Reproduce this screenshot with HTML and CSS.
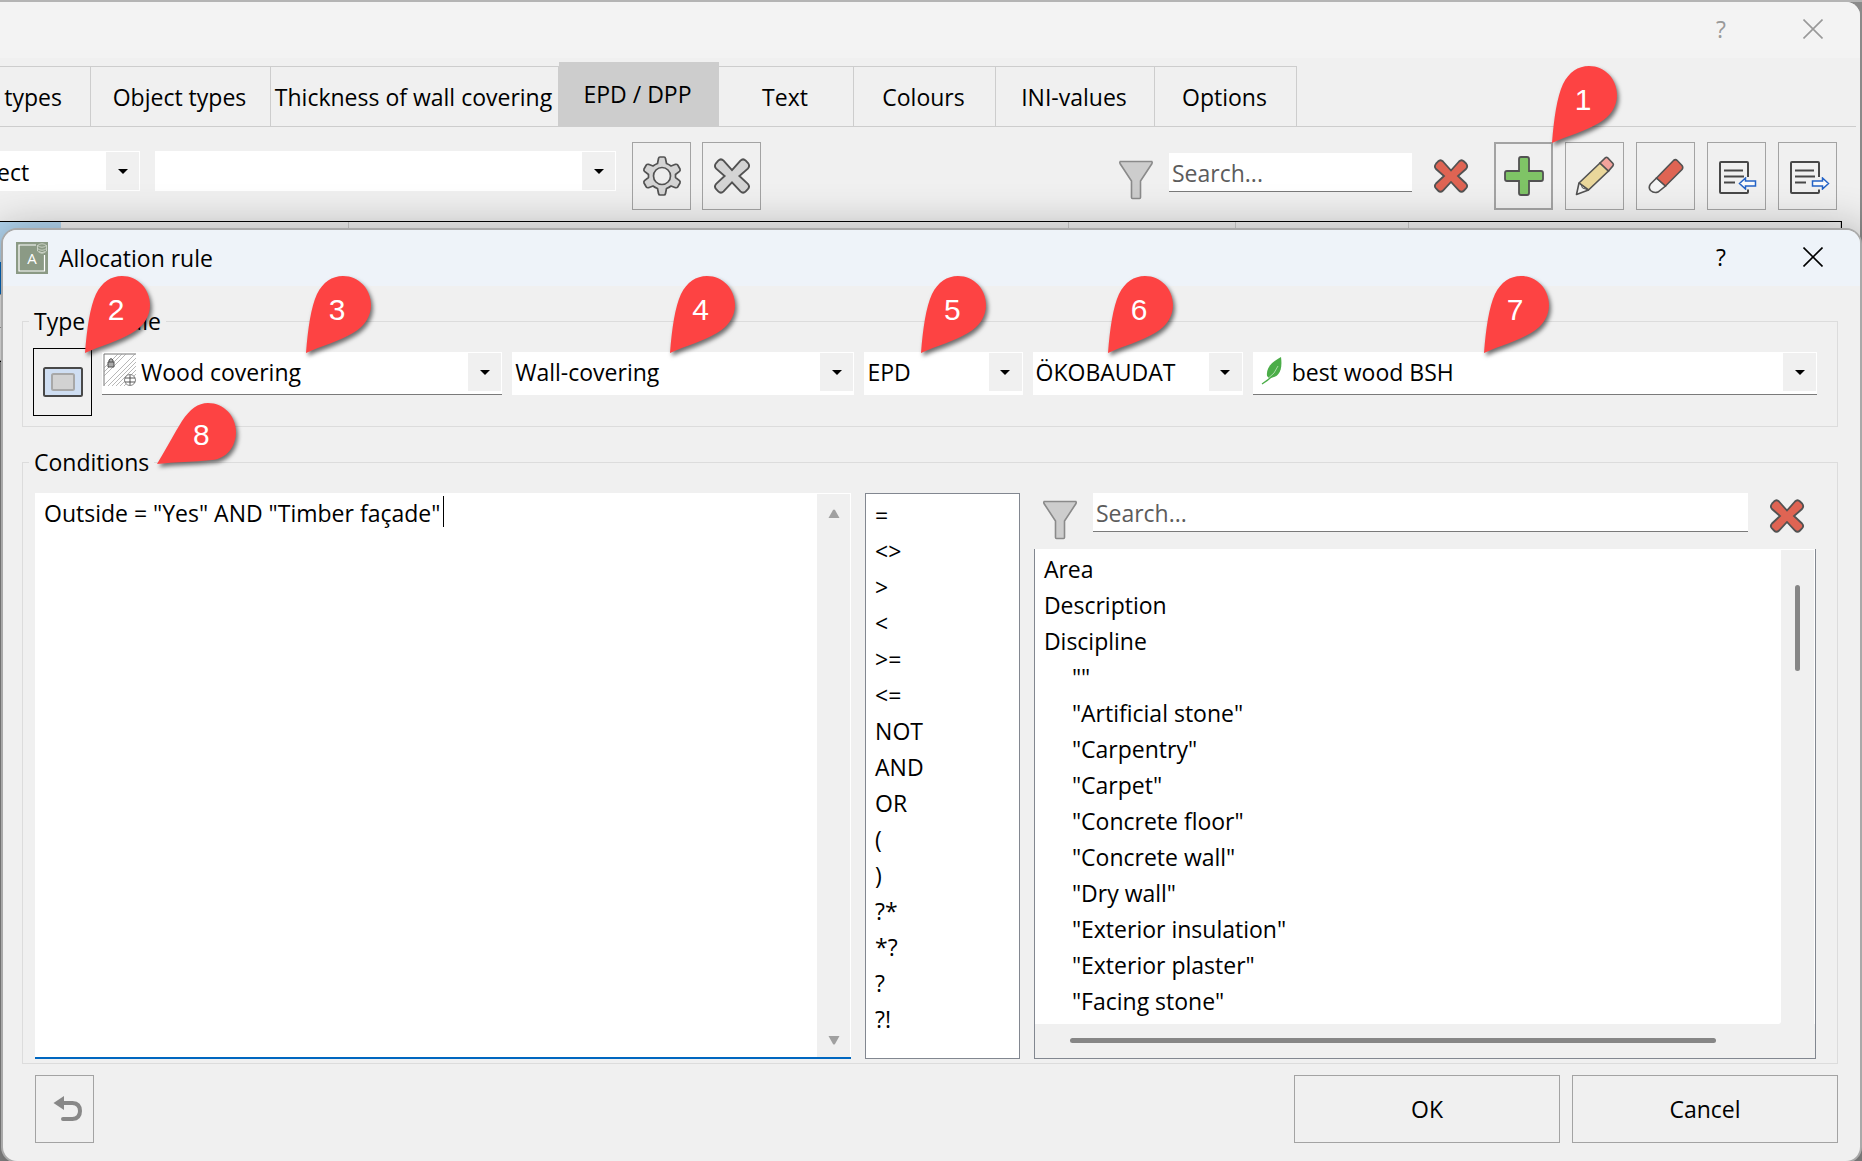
FILE: index.html
```html
<!DOCTYPE html>
<html lang="en">
<head>
<meta charset="utf-8">
<title>Allocation rule</title>
<link rel="stylesheet" href="styles.css">
</head>
<body>

<svg class="defs" aria-hidden="true">
  <symbol id="i-close" viewBox="0 0 20 20"><path d="M0.5 0.5 19.5 19.5M19.5 0.5 0.5 19.5" fill="none" stroke="currentColor" stroke-width="1.6"/></symbol>
  <symbol id="i-arrow" viewBox="0 0 10 5"><path d="M0 0H10L5 5Z" fill="currentColor"/></symbol>
  <symbol id="i-cross" viewBox="0 0 36 36"><path d="M18 12.500 26 3.500Q28.500 1 31 3.500L33.200 5.700Q35.300 8.500 33 11L25 18 33 25.500Q35.300 28 33 30.500L31 32.500Q28.500 35 26 32.500L18 24 10 32.500Q7.500 35 5 32.500L3 30.500Q0.700 28 3 25.500L11 18 3 11Q0.700 8.500 3 5.700L5 3.500Q7.500 1 10 3.500Z" stroke="#525252" stroke-width="1.8"/></symbol>
  <symbol id="i-funnel" viewBox="0 0 36 40"><path d="M2.200 1.500H33.800Q34.500 2.500 34 3.500L22.500 21V37.500Q22.500 38.500 21.500 38.500H14.500Q13.500 38.500 13.500 37.500V21L2 3.500Q1.500 2.500 2.200 1.500Z" fill="#cdcdcd" stroke="#8a8a8a" stroke-width="1.6"/></symbol>
  <symbol id="i-gear" viewBox="0 0 40 40"><path d="M18 1H22Q23.200 1 23.500 2.500L24.500 7.500Q27 8.500 29 10L33.500 8.300Q35 8 35.700 9L38 13Q38.500 14.300 37.500 15.300L33.500 18.500V21.500L37.500 24.700Q38.500 25.700 38 27L35.700 31Q35 32 33.500 31.700L29 30Q27 31.500 24.500 32.500L23.500 37.500Q23.200 39 22 39H18Q16.800 39 16.500 37.500L15.500 32.500Q13 31.500 11 30L6.500 31.700Q5 32 4.300 31L2 27Q1.500 25.700 2.500 24.700L6.500 21.500V18.500L2.500 15.300Q1.500 14.300 2 13L4.300 9Q5 8 6.500 8.300L11 10Q13 8.500 15.500 7.500L16.500 2.500Q16.800 1 18 1Z" fill="#d4d4d4" stroke="#525252" stroke-width="1.700" stroke-linejoin="round"/><circle cx="20" cy="20" r="8.500" fill="#ededed" stroke="#525252" stroke-width="1.700"/></symbol>
  <symbol id="i-plus" viewBox="0 0 40 40"><path d="M17 1H23Q25 1 25 3V15H37Q39 15 39 17V23Q39 25 37 25H25V37Q25 39 23 39H17Q15 39 15 37V25H3Q1 25 1 23V17Q1 15 3 15H15V3Q15 1 17 1Z" fill="#7fc466" stroke="#525252" stroke-width="1.8"/></symbol>
  <symbol id="i-pencil" viewBox="0 0 40 40"><path d="M4 27 1.500 38.500 13.500 34" fill="#f4f4f4" stroke="#525252" stroke-width="1.600" stroke-linejoin="round"/><path d="M4 27 25 7 33.500 15 13.500 34Z" fill="#ead79b" stroke="#525252" stroke-width="1.600"/><path d="M25 7 30.500 1.700Q31.500 1 32.500 1.700L38 7.500Q38.800 8.500 38 9.800L33.500 15Z" fill="#f2a29c" stroke="#525252" stroke-width="1.600"/><path d="M4 27 6 28.500 7.500 32 13.500 34" fill="none" stroke="#525252" stroke-width="1"/></symbol>
  <symbol id="i-eraser" viewBox="0 0 36 36"><path d="M8.500 20 2.500 26Q0 29.500 2.500 32.500 6 35.500 10 34L17.500 28Z" fill="#f4f4f4" stroke="#525252" stroke-width="1.600"/><path d="M8.500 20 25.500 2.500Q27.500 1 29 2.300L34 7.500Q35.500 9.500 34 11.500L17.500 28Z" fill="#df6453" stroke="#525252" stroke-width="1.600"/></symbol>
  <symbol id="i-sheet" viewBox="0 0 30 33"><path d="M29 16V2Q29 1 28 1H2Q1 1 1 2V31Q1 32 2 32H28Q29 32 29 31V28.500" fill="none" stroke="#484848" stroke-width="2"/><path d="M5 9.500H24M5 15.500H25M5 21.500H16" stroke="#484848" stroke-width="2"/></symbol>
  <symbol id="i-shaft" viewBox="0 0 18 13"><path d="M1 6.500 7 1V4H17V9H7V12Z" fill="#fafafa" stroke="#2463c6" stroke-width="1.500"/></symbol>
  <symbol id="i-pin" viewBox="0 0 66 78"><path d="M0 77C2 52 5 31 11 18 17 6 26 0 37 0 53 0 65 13 65 29 65 40 59 50 47 57 34 65 15 70 0 77Z" fill="#fd4343"/></symbol>
  <symbol id="i-pin-low" viewBox="0 0 80 62"><path d="M0 61C9 46 17 31 25 18 33 6 41 0 51 0 67 0 79 13 79 29 79 44 69 56 55 57 37 59 18 59 0 61Z" fill="#fd4343"/></symbol>
</svg>

<main class="desktop">
  <section class="window" aria-label="Settings">
    <header class="titlebar titlebar-inactive">
      <button class="caption" aria-label="Help">?</button>
      <button class="caption" aria-label="Close"><svg width="20" height="20"><use href="#i-close"/></svg></button>
    </header>

    <nav class="tabs">
      <button class="tab tab-cut">types</button>
      <button class="tab tab-object">Object types</button>
      <button class="tab tab-thickness">Thickness of wall covering</button>
      <button class="tab tab-active">EPD / DPP</button>
      <button class="tab tab-text">Text</button>
      <button class="tab tab-colours">Colours</button>
      <button class="tab tab-ini">INI-values</button>
      <button class="tab tab-options">Options</button>
    </nav>

    <div class="toolbar">
      <div class="combo combo-scope">
        <select aria-label="Scope"><option>ect</option></select>
        <span class="drop"><svg width="10" height="5"><use href="#i-arrow"/></svg></span>
      </div>
      <div class="combo combo-preset">
        <select aria-label="Preset"><option></option></select>
        <span class="drop"><svg width="10" height="5"><use href="#i-arrow"/></svg></span>
      </div>
      <div class="tools tools-view">
        <button class="tool" aria-label="Settings"><svg width="40" height="40"><use href="#i-gear"/></svg></button>
        <button class="tool" aria-label="Discard"><svg class="grey" width="38" height="38"><use href="#i-cross"/></svg></button>
      </div>
      <div class="search">
        <svg class="funnel" width="36" height="40"><use href="#i-funnel"/></svg>
        <input type="text" placeholder="Search..." aria-label="Search rules">
        <button class="clear" aria-label="Clear search"><svg class="red" width="36" height="36"><use href="#i-cross"/></svg></button>
      </div>
      <div class="tools">
        <div class="anchor">
          <button class="tool tool-default" aria-label="Add"><svg width="40" height="40"><use href="#i-plus"/></svg></button>
          <span class="marker marker-button"><svg width="66" height="78"><use href="#i-pin"/></svg><b>1</b></span>
        </div>
        <button class="tool" aria-label="Edit"><svg width="40" height="40"><use href="#i-pencil"/></svg></button>
        <button class="tool" aria-label="Delete"><svg width="36" height="36"><use href="#i-eraser"/></svg></button>
        <button class="tool tool-sheet" aria-label="Import"><svg width="36" height="34"><use href="#i-sheet" width="30" height="33"/><use href="#i-shaft" x="19" y="16" width="19" height="13"/></svg></button>
        <button class="tool tool-sheet" aria-label="Export"><svg width="36" height="34"><use href="#i-sheet" width="30" height="33"/><g transform="translate(40 16) scale(-1 1)"><use href="#i-shaft" width="19" height="13"/></g></svg></button>
      </div>
    </div>

    <div class="grid">
      <div class="grid-head"><i class="picked"></i><i></i><i></i><i></i><i></i><i></i></div>
      <div class="grid-row grid-row-picked"></div>
      <div class="grid-row"></div>
      <div class="grid-row"></div>
    </div>
  </section>

  <section class="dialog" role="dialog" aria-labelledby="dialog-title">
    <header class="titlebar">
      <svg class="logo" width="32" height="32" viewBox="0 0 32 32">
        <rect width="32" height="32" fill="#8b9a85"/>
        <path d="M20 3H3V29H28.500V13" fill="none" stroke="#fff" stroke-width="1.200"/>
        <path d="M21.500 3.500Q26 0 30.500 3.500V9Q26 13.500 21.500 9ZM21.500 3.500Q26 7 30.500 3.500M21.500 6.500Q26 10 30.500 6.500M23 9.500Q26 12 29 9.500" fill="none" stroke="#d5dcd1" stroke-width="0.800"/>
        <text x="16" y="22" class="logo-letter">A</text>
      </svg>
      <h1 id="dialog-title">Allocation rule</h1>
      <button class="caption" aria-label="Help">?</button>
      <button class="caption" aria-label="Close"><svg width="20" height="20"><use href="#i-close"/></svg></button>
    </header>

    <fieldset class="group group-type">
      <legend>Type of rule</legend>
      <div class="rule">
        <div class="anchor">
          <button class="tool tool-on" aria-label="Surface rule">
            <svg width="40" height="30" viewBox="0 0 40 30"><rect x="1" y="1" width="38" height="28" rx="1.500" fill="#cfdef2" stroke="#484848" stroke-width="2"/><rect x="9" y="7" width="22" height="16" rx="1.500" fill="#d2d2d2" stroke="#a8a8a8" stroke-width="2"/></svg>
          </button>
          <span class="marker marker-button"><svg width="66" height="78"><use href="#i-pin"/></svg><b>2</b></span>
        </div>
        <div class="combo combo-line combo-icon">
          <svg class="swatch" width="32" height="32" viewBox="0 0 32 32">
            <rect width="32" height="32" fill="#fff"/>
            <path d="M0 0H32M0 0V32" stroke="#777" stroke-width="1"/>
            <path d="M0 14 14 0M0 18 18 0M0 22 22 0M0 31 31 0M4 32 32 4M8 32 32 8M12 32 32 12M16 32 32 16M20 32 32 20" stroke="#999" stroke-width="0.700"/>
            <path d="M4 8H10V13H4ZM5 8V6Q7 3 9 6V8" fill="#aaa" stroke="#444" stroke-width="0.900"/>
            <circle cx="26" cy="26" r="5.500" fill="#fff" stroke="#666" stroke-width="0.800"/><path d="M21 24H31M21 28H31M26 21V31" fill="none" stroke="#444" stroke-width="0.900"/>
          </svg>
          <select aria-label="Component"><option>Wood covering</option></select>
          <span class="drop"><svg width="10" height="5"><use href="#i-arrow"/></svg></span>
          <span class="marker marker-half"><svg width="66" height="78"><use href="#i-pin"/></svg><b>3</b></span>
        </div>
        <div class="combo">
          <select aria-label="Object type"><option>Wall-covering</option></select>
          <span class="drop"><svg width="10" height="5"><use href="#i-arrow"/></svg></span>
          <span class="marker marker-mid"><svg width="66" height="78"><use href="#i-pin"/></svg><b>4</b></span>
        </div>
        <div class="combo">
          <select aria-label="Declaration"><option>EPD</option></select>
          <span class="drop"><svg width="10" height="5"><use href="#i-arrow"/></svg></span>
          <span class="marker marker-third"><svg width="66" height="78"><use href="#i-pin"/></svg><b>5</b></span>
        </div>
        <div class="combo">
          <select aria-label="Database"><option>ÖKOBAUDAT</option></select>
          <span class="drop"><svg width="10" height="5"><use href="#i-arrow"/></svg></span>
          <span class="marker marker-third"><svg width="66" height="78"><use href="#i-pin"/></svg><b>6</b></span>
        </div>
        <div class="combo combo-line combo-icon">
          <svg class="leaf" width="32" height="32" viewBox="0 0 32 32"><path d="M23 2C14 7 8 12 9 21L11 23C20 23 25 17 23 2Z" fill="#4bad48"/><path d="M4 29Q12 24 16 19L20 12" fill="none" stroke="#4bad48" stroke-width="1.300"/><path d="M10.500 23 16 18 20 11" fill="none" stroke="#b7e0b3" stroke-width="0.900"/></svg>
          <select aria-label="Record"><option>best wood BSH</option></select>
          <span class="drop"><svg width="10" height="5"><use href="#i-arrow"/></svg></span>
          <span class="marker marker-far"><svg width="66" height="78"><use href="#i-pin"/></svg><b>7</b></span>
        </div>
      </div>
    </fieldset>

    <fieldset class="group group-conditions">
      <legend>Conditions<span class="marker marker-low"><svg width="80" height="62"><use href="#i-pin-low"/></svg><b>8</b></span></legend>
      <div class="conditions">
        <div class="editor">
          <textarea aria-label="Condition" spellcheck="false">Outside = "Yes" AND "Timber façade"</textarea>
          <i class="caret"></i>
          <div class="steps">
            <svg class="up" width="12" height="9"><path d="M0.500 9 5 1Q6 0 7 1L11.500 9Z" fill="#a0a0a0"/></svg>
            <svg class="down" width="12" height="9"><path d="M0.500 0 5 8Q6 9 7 8L11.500 0Z" fill="#a0a0a0"/></svg>
          </div>
        </div>

        <ul class="operators">
          <li>=</li><li>&lt;&gt;</li><li>&gt;</li><li>&lt;</li><li>&gt;=</li><li>&lt;=</li><li>NOT</li><li>AND</li><li>OR</li><li>(</li><li>)</li><li>?*</li><li>*?</li><li>?</li><li>?!</li>
        </ul>

        <div class="fields">
          <div class="search">
            <svg class="funnel" width="36" height="40"><use href="#i-funnel"/></svg>
            <input type="text" placeholder="Search..." aria-label="Search fields">
            <button class="clear" aria-label="Clear search"><svg class="red" width="36" height="36"><use href="#i-cross"/></svg></button>
          </div>
          <div class="browser">
            <ul class="names">
              <li>Area</li>
              <li>Description</li>
              <li>Discipline
                <ul>
                  <li>""</li>
                  <li>"Artificial stone"</li>
                  <li>"Carpentry"</li>
                  <li>"Carpet"</li>
                  <li>"Concrete floor"</li>
                  <li>"Concrete wall"</li>
                  <li>"Dry wall"</li>
                  <li>"Exterior insulation"</li>
                  <li>"Exterior plaster"</li>
                  <li>"Facing stone"</li>
                </ul>
              </li>
            </ul>
            <div class="scroll-y"><i></i></div>
            <div class="scroll-x"><i></i></div>
          </div>
        </div>
      </div>
    </fieldset>

    <footer class="actions">
      <button class="tool tool-undo" aria-label="Undo"><svg width="30" height="26" viewBox="0 0 30 26"><path d="M11 7H19.500Q27 7.500 27 15 27 22.500 19.500 23H10" fill="none" stroke="#888" stroke-width="4" stroke-linecap="round"/><path d="M0.500 7 11 0V14Z" fill="#888"/></svg></button>
      <button class="push">OK</button>
      <button class="push">Cancel</button>
    </footer>
  </section>
</main>
</body>
</html>
```
FILE: styles.css
```css
* { box-sizing: border-box; }

body {
  margin: 0;
  background: #8a8a8a;
  color: #000;
  font: 23px/30px "Open Sans", "Noto Sans", sans-serif;
}

button, select, input, textarea { font: inherit; color: inherit; margin: 0; border-radius: 0; outline: 0; }
button { background: none; border: 0; padding: 0; }
ul { list-style: none; margin: 0; padding: 0; }
svg { display: block; flex: none; overflow: visible; }
.defs { position: absolute; width: 0; height: 0; overflow: hidden; }
.grey { fill: #d4d4d4; }
.red { fill: #df6453; }

.desktop {
  position: relative;
  min-height: 100vh;
  overflow: hidden;
  padding-right: 2px;
  border-top: 2px solid #b4b4b4;
}

/* settings window */
.window { background: #f0f0f0; border-top-right-radius: 14px; }

.titlebar { display: flex; align-items: center; height: 56px; background: #eef3f9; }
.titlebar-inactive { justify-content: flex-end; background: #f3f3f3; color: #999; border-top-right-radius: 14px; }
.caption { display: flex; align-items: center; justify-content: center; width: 92px; height: 56px; padding: 0 2px 2px 0; }

.tabs {
  display: flex;
  align-items: flex-end;
  margin-right: 4px;
  padding-top: 4px;
  border-bottom: 1px solid #cdcdcd;
}
.tab { height: 60px; padding-right: 2px; border: solid #cdcdcd; border-width: 1px 1px 0 0; white-space: nowrap; }
.tab-cut { width: 91px; padding-right: 28px; text-align: right; }
.tab-object { width: 180px; }
.tab-thickness { width: 288px; }
.tab-active { width: 160px; height: 64px; padding-bottom: 2px; background: #cdcdcd; }
.tab-text { width: 135px; }
.tab-colours { width: 142px; }
.tab-ini { width: 159px; }
.tab-options { width: 142px; }

.toolbar { display: flex; align-items: flex-start; height: 94px; padding: 15px 23px 0 0; }
.tools { display: flex; gap: 12px; }
.tools-view { gap: 11px; }
.tool {
  display: flex;
  flex: none;
  align-items: center;
  justify-content: center;
  width: 59px;
  height: 68px;
  border: 1px solid #a3a3a3;
}
.tool-default { border-width: 2px; }
.tool-on { border-color: #000; }
.tool-sheet { padding-top: 4px; }
.tool-undo { padding-left: 6px; }

.combo { position: relative; display: flex; background: #fff; height: 40px; }
.combo select {
  flex: 1;
  min-width: 0;
  appearance: none;
  background: none;
  border: 0;
  padding: 2px 38px 0 3px;
  opacity: 1;
}
.drop {
  position: absolute;
  top: 1px;
  right: 1px;
  display: flex;
  align-items: center;
  justify-content: center;
  width: 33px;
  height: 38px;
  background: #f0f0f0;
  pointer-events: none;
}
.combo-scope { width: 140px; margin-top: 9px; }
.combo-scope select { padding-left: 0; text-indent: -3px; }
.combo-preset { flex: 1; max-width: 461px; margin: 9px 16px 0 15px; }

.search { display: flex; align-items: flex-start; }
.search input {
  height: 39px;
  flex: 1;
  min-width: 0;
  margin: 0 21px 0 15px;
  padding: 1px 3px 0;
  background: #fff;
  border: 0;
  border-bottom: 1px solid #7a7a7a;
}
.search input::placeholder { color: #5c5c5c; opacity: 1; }
.funnel { margin-top: 7px; }
.clear { margin-top: 5px; }
.toolbar .search { width: 351px; margin: 11px 25px 0 auto; }

.grid { margin-right: 18px; border: 1px solid #000; border-left: 0; background: #f0f0f0; }
.grid-head { display: grid; grid-template-columns: 61px 288px 720px 167px 173px 1fr; height: 40px; }
.grid-head i { border-right: 1px solid #cdcdcd; }
.grid-head .picked { background: #b3d6f0; border: 0; }
.grid-row { height: 33px; border-bottom: 1px solid #a0a0a0; }
.grid-row-picked { background: #0067c0; }

/* allocation rule dialog */
.dialog {
  position: absolute;
  top: 228px;
  left: 3px;
  right: 2px;
  bottom: 0;
  display: flex;
  flex-direction: column;
  background: #f0f0f0;
  border-radius: 14px;
  box-shadow: 0 0 0 2px #a9a9a9, 0 8px 44px 8px rgba(0, 0, 0, 0.3);
}
.dialog .titlebar { flex: none; padding-left: 13px; border-radius: 14px 14px 0 0; }
.dialog h1 { flex: 1; margin: 0 0 0 11px; font: inherit; }
.logo-letter { font: 15px "Open Sans", sans-serif; fill: #fff; text-anchor: middle; }

.group { min-width: 0; margin: 0 22px 0 19px; border: 1px solid #dcdcdc; padding: 10px 20px 10px; }
.group legend { position: relative; margin-left: -4px; padding: 0 5px; line-height: 34px; }
.group-type { margin-top: 18px; padding-left: 10px; }
.group-conditions { flex: 1; margin-top: 18px; padding: 14px 21px 4px 12px; display: flex; flex-direction: column; }
.group-conditions legend { margin-left: -6px; }

.rule { display: grid; grid-template-columns: 59px 400fr 342fr 158fr 210fr 564fr; gap: 10px; align-items: start; }
.rule .combo { height: 43px; margin-top: 4px; }
.rule .combo select { padding-bottom: 5px; }
.combo-line { border-bottom: 1px solid #7a7a7a; }
.combo-icon select { margin-left: -32px; }
.rule .combo-icon select { padding-left: 37px; }
.rule .leaf + select { padding-left: 34px; }
.swatch { margin: 2px 0 0 2px; }
.leaf { margin: 3px 0 0 5px; }

.conditions { flex: 1; display: grid; grid-template-columns: 817fr 155fr 783fr; gap: 14px; }

.editor { position: relative; display: flex; background: #fff; border-bottom: 2px solid #0067c0; }
.editor textarea { flex: 1; min-width: 0; resize: none; border: 0; background: none; padding: 5px 9px; overflow: hidden; }
.caret { position: absolute; top: 3px; left: 408px; width: 1px; height: 31px; background: #000; }
.steps {
  display: flex;
  flex-direction: column;
  align-items: center;
  justify-content: space-between;
  width: 33px;
  margin: 1px 1px 0 0;
  padding: 15px 0 12px;
  background: #f0f0f0;
}

.operators { border: 1px solid #828790; background: #fff; padding: 3px 9px; line-height: 36px; }

.fields { display: flex; flex-direction: column; }
.fields .search { height: 56px; padding: 0 11px 0 8px; }
.browser {
  flex: 1;
  display: grid;
  grid-template: 1fr 34px / 1fr 34px;
  border: 1px solid #828790;
  border-top: 0;
  background: #f0f0f0;
}
.names { background: #fff; padding: 2px 9px 3px; line-height: 36px; border-bottom-right-radius: 3px; }
.names ul { padding-left: 28px; }
.scroll-y { padding: 35px 14px 0; border: solid #fff; border-width: 1px 1px 0 0; }
.scroll-y i { display: block; width: 5px; height: 86px; border-radius: 3px; background: #868686; }
.scroll-x { grid-column: 1 / 3; padding: 14px 99px 0 35px; }
.scroll-x i { display: block; height: 5px; border-radius: 3px; background: #868686; }

.actions { display: flex; gap: 12px; margin: 11px 22px 18px 32px; }
.actions .tool { margin-right: auto; }
.push { width: 266px; height: 68px; border: 1px solid #a3a3a3; }

/* numbered callouts */
.anchor { position: relative; display: flex; }
.marker { position: absolute; bottom: calc(100% - 2px); z-index: 2; pointer-events: none; }
.marker svg { filter: drop-shadow(2px 3px 2px rgba(0, 0, 0, 0.55)); }
.marker b {
  position: absolute;
  top: 17px;
  left: 21px;
  width: 20px;
  color: #fff;
  font: 30px/34px "Liberation Sans", sans-serif;
  text-align: center;
}
.marker-button { left: calc(100% - 1px); }
.rule .marker-button { left: calc(100% - 7px); bottom: calc(100% - 6px); }
.marker-half { left: 51%; }
.marker-mid { left: 46%; }
.marker-third { left: 36%; }
.marker-far { left: 41%; }
.marker-low { left: 100%; bottom: auto; top: -42px; margin-left: 3px; }
.marker-low b { top: 15px; left: 34px; }
```
